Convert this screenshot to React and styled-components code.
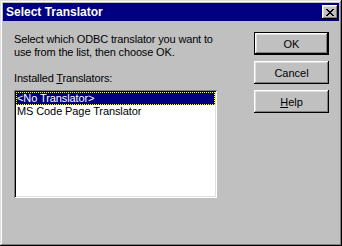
import React from "react";
import styled, { createGlobalStyle } from "styled-components";

const Global = createGlobalStyle`
  html, body { margin: 0; padding: 0; background: #c0c0c0; }
  body { font-family: "Liberation Sans", Arial, sans-serif; }
`;

const Win = styled.div`
  width: 342px;
  height: 246px;
  box-sizing: border-box;
  background: #c0c0c0;
  padding: 3px;
  display: flex;
  flex-direction: column;
  box-shadow: inset -1px -1px #000, inset 1px 1px #dfdfdf, inset -2px -2px #808080, inset 2px 2px #fff;
`;

const TitleBar = styled.div`
  height: 18px;
  background: #000080;
  display: flex;
  align-items: center;
  justify-content: space-between;
  padding: 0 1px 0 3px;
  flex: none;
`;

const Title = styled.span`
  color: #fff;
  font-weight: bold;
  font-size: 12px;
  line-height: 18px;
`;

const CloseBtn = styled.div`
  width: 16px;
  height: 14px;
  box-sizing: border-box;
  background: #c0c0c0;
  display: flex;
  align-items: center;
  justify-content: center;
  box-shadow: inset -1px -1px #000, inset 1px 1px #fff, inset -2px -2px #808080, inset 2px 2px #dfdfdf;
`;

const Body = styled.div`
  flex: 1;
  display: flex;
  justify-content: space-between;
  padding: 11px 10px 0 11px;
`;

const LeftCol = styled.div`
  width: 203px;
  display: flex;
  flex-direction: column;
`;

const Text = styled.div`
  font-size: 11px;
  line-height: 13px;
  letter-spacing: -0.15px;
  white-space: nowrap;
  color: #000;
  margin-top: 1px;
`;

const Label = styled(Text)`
  margin-top: 13px;
`;

const ListBox = styled.div`
  margin-top: 5px;
  height: 108px;
  box-sizing: border-box;
  background: #fff;
  padding: 2px;
  box-shadow: inset 1px 1px #808080, inset -1px -1px #fff, inset 2px 2px #000, inset -2px -2px #dfdfdf;
`;

const Item = styled.div`
  height: 13px;
  font-size: 11px;
  line-height: 13px;
  padding-left: 1px;
  letter-spacing: -0.1px;
  color: ${(p) => (p.$sel ? "#fff" : "#000")};
  background: ${(p) => (p.$sel ? "#000080" : "transparent")};
  outline: ${(p) => (p.$sel ? "1px dotted #ffff00" : "none")};
  outline-offset: -1px;
  white-space: nowrap;
`;

const RightCol = styled.div`
  width: 75px;
  display: flex;
  flex-direction: column;
  gap: 6px;
`;

const Button = styled.div`
  height: 23px;
  box-sizing: border-box;
  background: #c0c0c0;
  display: flex;
  align-items: center;
  justify-content: center;
  font-size: 11px;
  color: #000;
  box-shadow: inset -1px -1px #000, inset 1px 1px #fff, inset -2px -2px #808080, inset 2px 2px #dfdfdf;
  border: ${(p) => (p.$default ? "1px solid #000" : "none")};
`;

const U = styled.span`
  text-decoration: underline;
`;

export default function App() {
  return (
    <>
      <Global />
      <Win>
        <TitleBar>
          <Title>Select Translator</Title>
          <CloseBtn>
            <svg width="8" height="7" viewBox="0 0 8 7" shapeRendering="crispEdges">
              <path d="M0 0h2v1h-2zM6 0h2v1h-2zM1 1h2v1h-2zM5 1h2v1h-2zM2 2h4v1h-4zM3 3h2v1h-2zM2 4h4v1h-4zM1 5h2v1h-2zM5 5h2v1h-2zM0 6h2v1h-2zM6 6h2v1h-2z" fill="#000" />
            </svg>
          </CloseBtn>
        </TitleBar>
        <Body>
          <LeftCol>
            <Text>
              Select which ODBC translator you want to
              <br />
              use from the list, then choose OK.
            </Text>
            <Label>
              Installed <U>T</U>ranslators:
            </Label>
            <ListBox>
              <Item $sel>&lt;No Translator&gt;</Item>
              <Item>MS Code Page Translator</Item>
            </ListBox>
          </LeftCol>
          <RightCol>
            <Button $default>OK</Button>
            <Button>Cancel</Button>
            <Button>
              <span>
                <U>H</U>elp
              </span>
            </Button>
          </RightCol>
        </Body>
      </Win>
    </>
  );
}
